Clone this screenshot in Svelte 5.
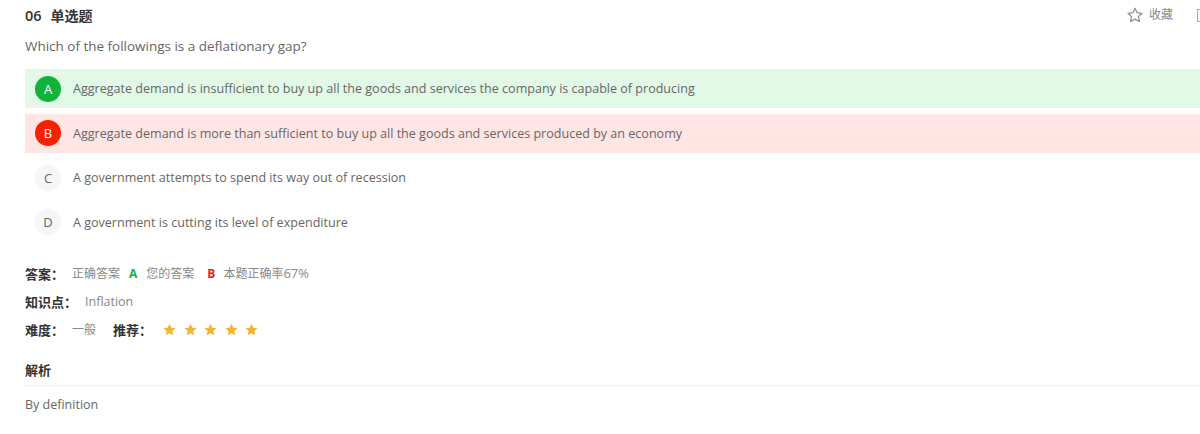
<script>
  const options = [
    { key: 'A', text: 'Aggregate demand is insufficient to buy up all the goods and services the company is capable of producing', state: 'right' },
    { key: 'B', text: 'Aggregate demand is more than sufficient to buy up all the goods and services produced by an economy', state: 'wrong' },
    { key: 'C', text: 'A government attempts to spend its way out of recession', state: '' },
    { key: 'D', text: 'A government is cutting its level of expenditure', state: '' }
  ]
  const stars = [1, 2, 3, 4, 5]
</script>

<div class="page">
  <div class="head">
    <div class="title"><span class="num">06</span><span>单选题</span></div>
    <div class="tools">
      <svg class="fav" width="16" height="16" viewBox="0 0 16 16">
        <path d="M8 1.2l2.1 4.5 4.9.6-3.6 3.3 1 4.9L8 12.1l-4.4 2.4 1-4.9L1 6.3l4.9-.6z" fill="none" stroke="#8c8c8c" stroke-width="1.2" stroke-linejoin="round" />
      </svg>
      <span class="fav-text">收藏</span>
      <span class="box"></span>
    </div>
  </div>

  <p class="question">Which of the followings is a deflationary gap?</p>

  <div class="options">
    {#each options as option}
      <div class="option {option.state}">
        <span class="badge">{option.key}</span>
        <span>{option.text}</span>
      </div>
    {/each}
  </div>

  <div class="meta">
    <div class="row">
      <span class="label">答案：</span>
      <span class="answer-a">正确答案</span>
      <b class="green">A</b>
      <span class="answer-b">您的答案</span>
      <b class="red">B</b>
      <span class="answer-c">本题正确率<span class="rate">67%</span></span>
    </div>
    <div class="row">
      <span class="label">知识点：</span>
      <span class="topic">Inflation</span>
    </div>
    <div class="row">
      <span class="label">难度：</span>
      <span class="level">一般</span>
      <span class="label rec">推荐：</span>
      <span class="stars">
        {#each stars as s}
          <svg width="13" height="13" viewBox="0 0 16 16">
            <path d="M8 .8l2.2 4.9 5.3.6-4 3.6 1.1 5.3L8 12.5l-4.6 2.7 1.1-5.3-4-3.6 5.3-.6z" fill="#f5b335" />
          </svg>
        {/each}
      </span>
    </div>
  </div>

  <div class="analysis">
    <div class="analysis-title">解析</div>
    <div class="analysis-body">By definition</div>
  </div>
</div>

<style>
  :global(body) {
    background: #fff;
    overflow: hidden;
  }
  .page {
    width: 1200px;
    height: 434px;
    box-sizing: border-box;
    padding: 6px 0 0 25px;
    font-family: "Open Sans", "Noto Sans CJK SC", sans-serif;
    font-size: 12.56px;
    color: #666;
    overflow: hidden;
  }
  .head {
    display: flex;
    justify-content: space-between;
    height: 20px;
    line-height: 20px;
  }
  .title {
    display: flex;
    gap: 9px;
    color: #333;
    font-weight: 600;
    font-size: 14px;
  }
  .num {
    font-size: 14.5px;
  }
  .tools {
    display: flex;
    align-items: center;
    margin-right: -7px;
    margin-top: -2px;
    color: #888;
    font-size: 12px;
  }
  .fav {
    margin-right: 6px;
  }
  .box {
    width: 10px;
    height: 13px;
    margin-left: 24px;
    border: 1px solid #aaa;
    box-sizing: border-box;
  }
  .question {
    margin: 10px 0 0;
    font-size: 13.47px;
    line-height: 20px;
    color: #666;
  }
  .options {
    display: flex;
    flex-direction: column;
    gap: 5.5px;
    margin-top: 13px;
  }
  .option {
    display: flex;
    align-items: center;
    gap: 12px;
    height: 39px;
    padding-left: 10px;
  }
  .option.right {
    background: #e2f9e7;
  }
  .option.wrong {
    background: #ffe6e4;
  }
  .badge {
    display: flex;
    align-items: center;
    justify-content: center;
    width: 26px;
    height: 26px;
    border-radius: 50%;
    background: #f5f6f7;
    color: #666;
    font-size: 13px;
  }
  .right .badge {
    background: #12b33a;
    color: #fff;
  }
  .wrong .badge {
    background: #f52200;
    color: #fff;
  }
  .meta {
    margin-top: 17.5px;
  }
  .row {
    display: flex;
    align-items: center;
    height: 28px;
    font-size: 12px;
    color: #888;
  }
  .label {
    color: #333;
    font-weight: 600;
    font-size: 13px;
  }
  .answer-a {
    margin-left: 8px;
  }
  .green {
    margin-left: 9px;
    color: #12b33a;
  }
  .answer-b {
    margin-left: 9px;
  }
  .red {
    margin-left: 13px;
    color: #e02a1a;
  }
  .answer-c {
    margin-left: 8px;
  }
  .rate {
    font-size: 13px;
  }
  .topic {
    margin-left: 8px;
    font-size: 12.5px;
  }
  .level {
    margin-left: 8px;
  }
  .rec {
    margin-left: 17px;
  }
  .stars {
    display: flex;
    gap: 7.5px;
    margin-left: 11px;
  }
  .analysis {
    margin-top: 13px;
  }
  .analysis-title {
    height: 29px;
    line-height: 28px;
    color: #333;
    font-weight: 600;
    font-size: 13px;
    border-bottom: 1px solid #eee;
  }
  .analysis-body {
    margin-top: 10px;
    line-height: 18px;
    color: #666;
    font-size: 12.5px;
  }
</style>
